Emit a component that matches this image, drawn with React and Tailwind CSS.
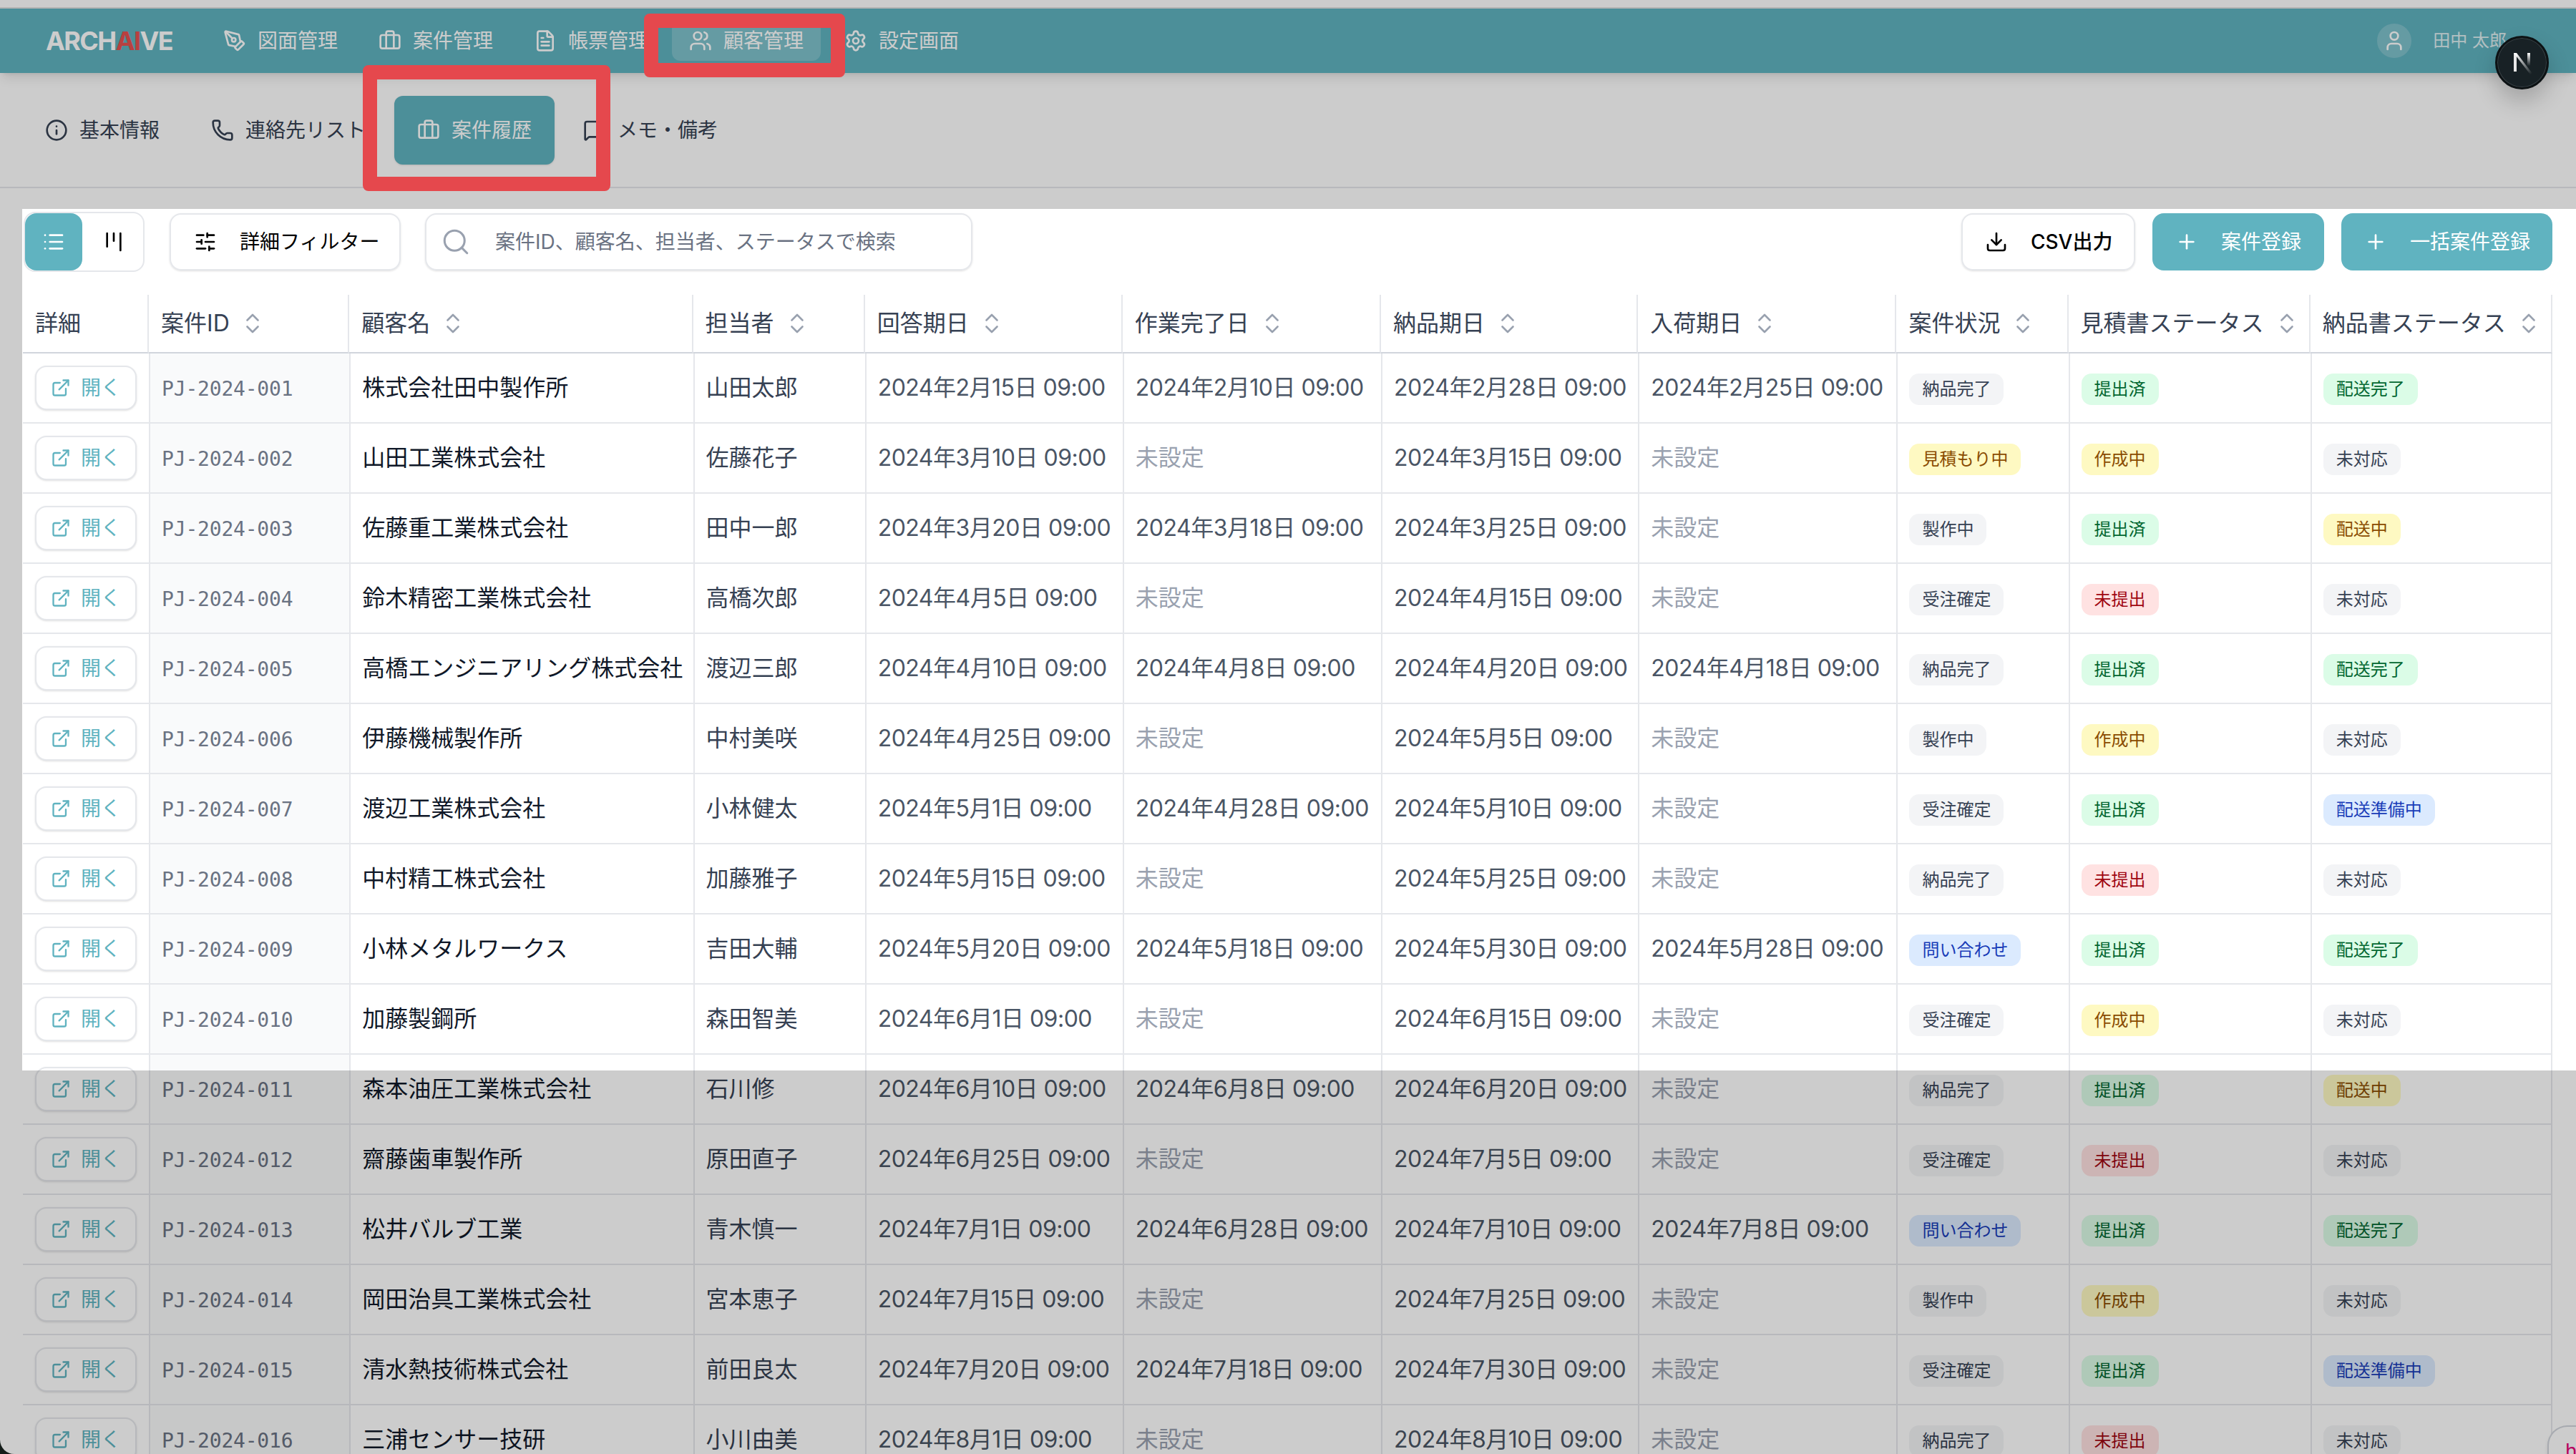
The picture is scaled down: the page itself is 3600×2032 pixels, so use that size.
import {
  PenTool,
  Briefcase,
  FileText,
  Users,
  Settings,
  User,
  Info,
  Phone,
  MessageSquare,
  List,
  Kanban,
  SlidersHorizontal,
  Search,
  Download,
  Plus,
  ExternalLink,
  ChevronsUpDown,
} from "lucide-react";

const NAV_ITEMS = [
  { label: "図面管理", icon: PenTool },
  { label: "案件管理", icon: Briefcase },
  { label: "帳票管理", icon: FileText },
  { label: "顧客管理", icon: Users, active: true },
  { label: "設定画面", icon: Settings },
];

const TABS = [
  { label: "基本情報", icon: Info },
  { label: "連絡先リスト", icon: Phone },
  { label: "案件履歴", icon: Briefcase, active: true },
  { label: "メモ・備考", icon: MessageSquare },
];

const COLUMNS = [
  { label: "詳細", width: "w-[176px]", plain: true },
  { label: "案件ID", width: "w-[280px]" },
  { label: "顧客名", width: "w-[480px]" },
  { label: "担当者", width: "w-[240px]" },
  { label: "回答期日", width: "w-[360px]" },
  { label: "作業完了日", width: "w-[361px]" },
  { label: "納品期日", width: "w-[359px]" },
  { label: "入荷期日", width: "w-[361px]" },
  { label: "案件状況", width: "w-[240px]" },
  { label: "見積書ステータス", width: "w-[338px]" },
  { label: "納品書ステータス", width: "w-[338px]" },
];

const BADGE_COLORS = {
  納品完了: "bg-gray-100 text-gray-700",
  製作中: "bg-gray-100 text-gray-700",
  受注確定: "bg-gray-100 text-gray-700",
  未対応: "bg-gray-100 text-gray-700",
  見積もり中: "bg-yellow-100 text-yellow-800",
  作成中: "bg-yellow-100 text-yellow-800",
  配送中: "bg-yellow-100 text-yellow-800",
  提出済: "bg-green-100 text-green-800",
  配送完了: "bg-green-100 text-green-800",
  未提出: "bg-red-100 text-red-800",
  問い合わせ: "bg-blue-100 text-blue-800",
  配送準備中: "bg-blue-100 text-blue-800",
};

const ROWS = [
  ["001", "株式会社田中製作所", "山田太郎", "2月15日", "2月10日", "2月28日", "2月25日", "納品完了", "提出済", "配送完了"],
  ["002", "山田工業株式会社", "佐藤花子", "3月10日", null, "3月15日", null, "見積もり中", "作成中", "未対応"],
  ["003", "佐藤重工業株式会社", "田中一郎", "3月20日", "3月18日", "3月25日", null, "製作中", "提出済", "配送中"],
  ["004", "鈴木精密工業株式会社", "高橋次郎", "4月5日", null, "4月15日", null, "受注確定", "未提出", "未対応"],
  ["005", "高橋エンジニアリング株式会社", "渡辺三郎", "4月10日", "4月8日", "4月20日", "4月18日", "納品完了", "提出済", "配送完了"],
  ["006", "伊藤機械製作所", "中村美咲", "4月25日", null, "5月5日", null, "製作中", "作成中", "未対応"],
  ["007", "渡辺工業株式会社", "小林健太", "5月1日", "4月28日", "5月10日", null, "受注確定", "提出済", "配送準備中"],
  ["008", "中村精工株式会社", "加藤雅子", "5月15日", null, "5月25日", null, "納品完了", "未提出", "未対応"],
  ["009", "小林メタルワークス", "吉田大輔", "5月20日", "5月18日", "5月30日", "5月28日", "問い合わせ", "提出済", "配送完了"],
  ["010", "加藤製鋼所", "森田智美", "6月1日", null, "6月15日", null, "受注確定", "作成中", "未対応"],
  ["011", "森本油圧工業株式会社", "石川修", "6月10日", "6月8日", "6月20日", null, "納品完了", "提出済", "配送中"],
  ["012", "齋藤歯車製作所", "原田直子", "6月25日", null, "7月5日", null, "受注確定", "未提出", "未対応"],
  ["013", "松井バルブ工業", "青木慎一", "7月1日", "6月28日", "7月10日", "7月8日", "問い合わせ", "提出済", "配送完了"],
  ["014", "岡田治具工業株式会社", "宮本恵子", "7月15日", null, "7月25日", null, "製作中", "作成中", "未対応"],
  ["015", "清水熱技術株式会社", "前田良太", "7月20日", "7月18日", "7月30日", null, "受注確定", "提出済", "配送準備中"],
  ["016", "三浦センサー技研", "小川由美", "8月1日", null, "8月10日", null, "納品完了", "未提出", "未対応"],
];

function Badge({ label }) {
  return (
    <span className={`inline-flex h-[44px] items-center rounded-[14px] px-[18px] text-[24px] leading-none translate-y-[2px] ${BADGE_COLORS[label]}`}>
      {label}
    </span>
  );
}

function DateCell({ value }) {
  return (
    <td className="border-b-2 border-l-2 border-gray-200 pl-4 text-[32px] whitespace-nowrap">
      {value ? (
        <span className="tracking-[-0.5px] text-gray-600">2024年{value} 09:00</span>
      ) : (
        <span className="text-gray-400">未設定</span>
      )}
    </td>
  );
}

function StatusCell({ label, last }) {
  return (
    <td className={`border-b-2 border-l-2 border-gray-200 pl-4 ${last ? "border-r-2" : ""}`}>
      <Badge label={label} />
    </td>
  );
}

function Row({ row }) {
  const [id, customer, owner, answer, done, delivery, arrival, status, quote, invoice] = row;
  return (
    <tr className="h-[98px]">
      <td className="border-b-2 border-gray-200 pl-[17px]">
        <button className="flex h-[62px] w-[142px] items-center gap-[14px] rounded-2xl border-2 border-gray-200 bg-white px-5 text-[28px] text-[#60b3c0] shadow-sm">
          <ExternalLink size={28} />
          <span className="whitespace-nowrap">開く</span>
        </button>
      </td>
      <td className="border-b-2 border-l-2 border-gray-200 bg-gray-50 pl-4 pt-1 font-['DejaVu_Sans_Mono',monospace] text-[28px] tracking-[-0.2px] text-gray-500">
        PJ-2024-{id}
      </td>
      <td className="border-b-2 border-l-2 border-gray-200 pl-4 text-[32px] whitespace-nowrap text-gray-900">{customer}</td>
      <td className="border-b-2 border-l-2 border-gray-200 pl-4 text-[32px] whitespace-nowrap text-gray-700">{owner}</td>
      <DateCell value={answer} />
      <DateCell value={done} />
      <DateCell value={delivery} />
      <DateCell value={arrival} />
      <StatusCell label={status} />
      <StatusCell label={quote} />
      <StatusCell label={invoice} last />
    </tr>
  );
}

function NextBadge() {
  return (
    <div className="absolute left-[3487px] top-[50px] z-20 flex h-[75px] w-[75px] items-center justify-center rounded-full border-[3px] border-[#0d1214] bg-[#182125] shadow-[0_0_0_1px_#3a4347_inset,0_16px_32px_rgba(0,0,0,0.2)]">
      <svg width="36" height="36" viewBox="0 0 36 36" fill="none">
        <defs>
          <linearGradient id="next-diagonal" x1="8" y1="6" x2="30" y2="34" gradientUnits="userSpaceOnUse">
            <stop stopColor="#ffffff" />
            <stop offset="1" stopColor="#ffffff" stopOpacity="0" />
          </linearGradient>
          <linearGradient id="next-right" x1="27" y1="4" x2="27" y2="22" gradientUnits="userSpaceOnUse">
            <stop stopColor="#ffffff" />
            <stop offset="1" stopColor="#ffffff" stopOpacity="0" />
          </linearGradient>
        </defs>
        <path d="M6 4h4v26H6z" fill="#e8e8e8" />
        <path d="M6 4h4l23 30h-4z" fill="url(#next-diagonal)" />
        <path d="M25 4h4v18h-4z" fill="url(#next-right)" />
      </svg>
    </div>
  );
}

export default function App() {
  return (
    <div className="relative h-[2032px] w-[3600px] overflow-hidden bg-[#1a2320] font-['Inter','Noto_Sans_CJK_JP',sans-serif]">
      <div className="flex h-full flex-col overflow-hidden rounded-bl-[20px] bg-white">
        <div className="h-3 shrink-0 border-b-2 border-[#e2e2e2] bg-white" />

        {/* Top navigation */}
        <header className="relative flex h-[90px] shrink-0 items-center bg-[#60b3c0] pl-[64px] pr-[97px] text-white shadow-lg">
          <div className="w-[224px] text-[36px] font-bold leading-none tracking-[-1.6px]">
            ARCH<span className="text-[#e65050]">AI</span>VE
          </div>
          <nav className="flex gap-[9px]">
            {NAV_ITEMS.map((item) => (
              <div
                key={item.label}
                className={`flex h-[56px] w-[208px] items-center gap-4 rounded-xl px-6 text-[28px] ${item.active ? "bg-white/20" : ""}`}
              >
                <item.icon size={32} strokeWidth={2} className="shrink-0" />
                <span className="whitespace-nowrap">{item.label}</span>
              </div>
            ))}
          </nav>
          <div className="ml-auto flex items-center gap-[30px]">
            <div className="flex h-[48px] w-[48px] items-center justify-center rounded-full bg-white/20">
              <User size={32} />
            </div>
            <span className="whitespace-nowrap text-[24px] text-white/80">田中 太郎</span>
          </div>
        </header>

        {/* Customer detail tabs */}
        <div className="flex h-[161px] shrink-0 items-center gap-2 border-b-2 border-gray-200 pl-[31px]">
          {TABS.map((tab) => (
            <div
              key={tab.label}
              className={`flex h-24 items-center gap-4 whitespace-nowrap rounded-xl px-8 text-[28px] ${tab.active ? "bg-[#60b3c0] text-white shadow-sm" : "text-gray-700"}`}
            >
              <tab.icon size={32} className="shrink-0" />
              <span>{tab.label}</span>
            </div>
          ))}
        </div>

        {/* Toolbar */}
        <div className="mt-[35px] flex h-[80px] shrink-0 items-center pl-[33px] pr-[33px] text-[28px]">
          <div className="flex h-[84px] w-[169px] items-center rounded-2xl border-2 border-gray-200">
            <div className="flex h-[80px] w-[80px] items-center justify-center rounded-2xl bg-[#60b3c0] text-white">
              <List size={32} />
            </div>
            <div className="flex h-[80px] flex-1 items-center justify-center pl-[3px] text-black">
              <Kanban size={32} />
            </div>
          </div>
          <div className="ml-[35px] flex h-[80px] w-[323px] items-center gap-[32px] rounded-2xl border-2 border-gray-200 pl-[32px] text-black shadow-sm">
            <SlidersHorizontal size={32} className="shrink-0" />
            <span className="whitespace-nowrap">詳細フィルター</span>
          </div>
          <div className="ml-[34px] flex h-[80px] w-[765px] items-center gap-[34px] rounded-2xl border-2 border-gray-200 pl-[20px] shadow-sm">
            <Search size={42} strokeWidth={1.75} className="shrink-0 text-gray-400" />
            <span className="whitespace-nowrap text-gray-500">案件ID、顧客名、担当者、ステータスで検索</span>
          </div>
          <div className="ml-auto flex items-center gap-6">
            <div className="flex h-[80px] w-[243px] items-center gap-8 rounded-2xl border-2 border-gray-200 pl-[31px] font-medium text-black shadow-sm">
              <Download size={32} className="shrink-0" />
              <span className="whitespace-nowrap">CSV出力</span>
            </div>
            <div className="flex h-[80px] w-[240px] items-center gap-8 rounded-2xl bg-[#60b3c0] pl-8 text-white">
              <Plus size={32} className="shrink-0" />
              <span className="whitespace-nowrap">案件登録</span>
            </div>
            <div className="flex h-[80px] w-[295px] items-center gap-8 rounded-2xl bg-[#60b3c0] pl-8 text-white">
              <Plus size={32} className="shrink-0" />
              <span className="whitespace-nowrap">一括案件登録</span>
            </div>
          </div>
        </div>

        {/* Project table */}
        <table className="ml-8 mt-[34px] w-[3535px] shrink-0 table-fixed border-separate border-spacing-0">
          <thead>
            <tr className="h-[82px]">
              {COLUMNS.map((col) => (
                <th
                  key={col.label}
                  className={`${col.width} border-b-2 border-r-2 border-b-gray-300 border-r-gray-200 pl-[17px] text-left text-[32px] font-normal whitespace-nowrap text-gray-700`}
                >
                  <span className="flex items-center gap-[14px]">
                    {col.label}
                    {!col.plain && <ChevronsUpDown size={36} strokeWidth={1.75} className="shrink-0 text-gray-400" />}
                  </span>
                </th>
              ))}
            </tr>
          </thead>
          <tbody>
            {ROWS.map((row) => (
              <Row key={row[0]} row={row} />
            ))}
          </tbody>
        </table>
      </div>

      {/* Corner of a toast sticking out at the bottom right */}
      <div className="absolute left-[3560px] top-[1992px] h-[60px] w-[60px] rounded-tl-[28px] border-l-2 border-t-2 border-gray-300 bg-white pl-[23px] pt-[20px] text-[28px] leading-none text-pink-600 shadow-md">
        ht
      </div>

      {/* Dimmed overlay around the highlighted area */}
      <div className="absolute inset-x-0 top-0 z-10 h-[292px] bg-black/20" />
      <div className="absolute left-0 top-[292px] z-10 h-[1204px] w-[31px] bg-black/20" />
      <div className="absolute inset-x-0 bottom-0 top-[1496px] z-10 bg-black/20" />

      {/* Red annotation boxes */}
      <div className="absolute left-[900px] top-[19px] z-20 h-[89px] w-[281px] rounded-lg border-[20px] border-[#e5484d]" />
      <div className="absolute left-[507px] top-[91px] z-20 h-[176px] w-[346px] rounded-lg border-[20px] border-[#e5484d]" />

      <NextBadge />
    </div>
  );
}
